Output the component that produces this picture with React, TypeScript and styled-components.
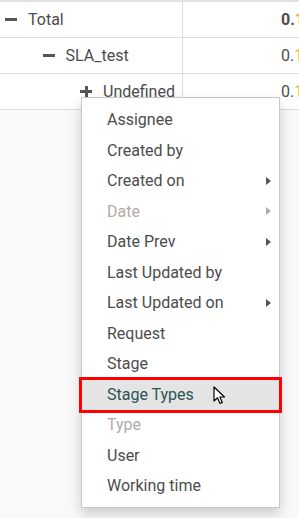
import React from "react";
import styled, { createGlobalStyle } from "styled-components";

const GlobalStyle = createGlobalStyle`
  html, body {
    margin: 0;
    padding: 0;
    background: #f9f9f9;
    overflow: hidden;
  }
  body {
    font-family: Roboto, "Liberation Sans", sans-serif;
    font-size: 16px;
    color: #4c4c4c;
  }
`;

type Row = {
  label: string;
  depth: number;
  open: boolean;
  value: string;
  total?: boolean;
};

const rows: Row[] = [
  { label: "Total", depth: 0, open: true, value: "0.", total: true },
  { label: "SLA_test", depth: 1, open: true, value: "0." },
  { label: "Undefined", depth: 2, open: false, value: "0." },
];

type Item = { label: string; sub?: boolean; disabled?: boolean; active?: boolean };

const items: Item[] = [
  { label: "Assignee" },
  { label: "Created by" },
  { label: "Created on", sub: true },
  { label: "Date", sub: true, disabled: true },
  { label: "Date Prev", sub: true },
  { label: "Last Updated by" },
  { label: "Last Updated on", sub: true },
  { label: "Request" },
  { label: "Stage" },
  { label: "Stage Types", active: true },
  { label: "Type", disabled: true },
  { label: "User" },
  { label: "Working time" },
];

function App() {
  return (
    <>
      <GlobalStyle />
      <Page>
        <Table>
          {rows.map((r) => (
            <TableRow key={r.label}>
              <HeaderCell depth={r.depth}>
                <Toggle open={r.open} />
                <span>{r.label}</span>
              </HeaderCell>
              <ValueCell total={r.total}>
                {r.value}
                <Clip>1</Clip>
              </ValueCell>
            </TableRow>
          ))}
        </Table>
        <Menu>
          {items.map((it) => (
            <MenuItem key={it.label} disabled={it.disabled} active={it.active}>
              {it.label}
              {it.sub && <Caret disabled={it.disabled} />}
              {it.active && (
                <Cursor width="13" height="19" viewBox="0 0 13 19">
                  <path
                    d="M1 1 L1 15 L4.5 11.8 L7 17.5 L9.3 16.5 L6.9 11 L11.5 11 Z"
                    fill="#fff"
                    stroke="#000"
                    strokeWidth="1.2"
                    strokeLinejoin="round"
                  />
                </Cursor>
              )}
            </MenuItem>
          ))}
        </Menu>
      </Page>
    </>
  );
}

const Page = styled.div`
  position: relative;
  width: 299px;
  height: 518px;
  overflow: hidden;
`;

const Table = styled.div`
  border-top: 2px solid #e2e2e2;
  background: #fff;
`;

const TableRow = styled.div`
  display: grid;
  grid-template-columns: 183px 1fr;
  height: 35px;
  border-bottom: 1px solid #dcdcdc;
`;

const HeaderCell = styled.div<{ depth: number }>`
  display: flex;
  align-items: center;
  gap: 11px;
  padding-left: ${(p) => 5 + p.depth * 37.5}px;
  border-right: 1px solid #dcdcdc;
  white-space: nowrap;
  overflow: hidden;
  line-height: 1;
`;

const Toggle = styled.span<{ open: boolean }>`
  position: relative;
  width: 12px;
  height: 12px;
  flex: none;
  &::before {
    content: "";
    position: absolute;
    left: 0;
    top: 4.5px;
    width: 12px;
    height: 3px;
    background: #555;
  }
  &::after {
    content: "";
    display: ${(p) => (p.open ? "none" : "block")};
    position: absolute;
    left: 4.5px;
    top: 0;
    width: 3px;
    height: 12px;
    background: #555;
  }
`;

const ValueCell = styled.div<{ total?: boolean }>`
  display: flex;
  align-items: center;
  padding-left: 98px;
  white-space: nowrap;
  font-weight: ${(p) => (p.total ? 700 : 400)};
  line-height: 1;
`;

const Clip = styled.span`
  color: #dfb25a;
`;

const Menu = styled.div`
  position: absolute;
  left: 81px;
  top: 97px;
  width: 197px;
  padding: 7px 0 5px;
  background: #fff;
  border: 1px solid #c8c8c8;
  box-shadow: 0 6px 12px rgba(0, 0, 0, 0.18);
`;

const MenuItem = styled.div<{ disabled?: boolean; active?: boolean }>`
  position: relative;
  display: flex;
  align-items: center;
  height: 30.5px;
  padding-left: 25px;
  white-space: nowrap;
  line-height: 1;
  color: ${(p) => (p.disabled ? "#b3aaa6" : p.active ? "#2e5357" : "#4c4c4c")};
  background: ${(p) => (p.active ? "#e4e4e4" : "transparent")};
  outline: ${(p) => (p.active ? "3px solid #ff0000" : "none")};
  z-index: ${(p) => (p.active ? 1 : 0)};
`;

const Caret = styled.span<{ disabled?: boolean }>`
  position: absolute;
  right: 8px;
  top: 50%;
  margin-top: -4.5px;
  width: 0;
  height: 0;
  border-top: 4.5px solid transparent;
  border-bottom: 4.5px solid transparent;
  border-left: 5px solid ${(p) => (p.disabled ? "#b3aaa6" : "#555")};
`;

const Cursor = styled.svg`
  position: absolute;
  left: 131px;
  top: 6px;
`;

export default App;
